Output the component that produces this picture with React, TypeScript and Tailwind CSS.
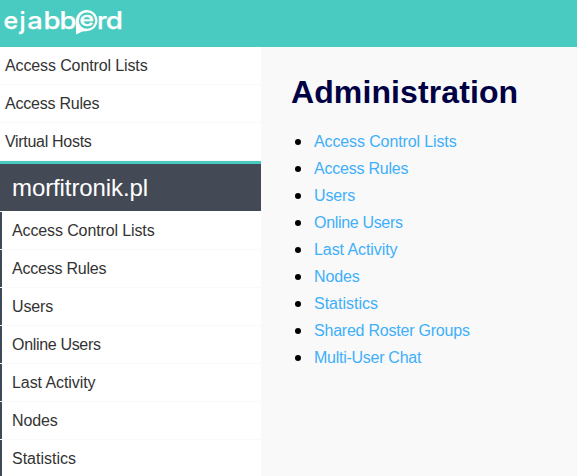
type Item = { label: string; tracking: string };

const acl: Item = { label: "Access Control Lists", tracking: "tracking-[-0.12px]" };
const rules: Item = { label: "Access Rules", tracking: "tracking-[-0.22px]" };
const hosts: Item = { label: "Virtual Hosts", tracking: "tracking-[-0.3px]" };
const users: Item = { label: "Users", tracking: "tracking-[-0.15px]" };
const online: Item = { label: "Online Users", tracking: "tracking-[-0.32px]" };
const activity: Item = { label: "Last Activity", tracking: "tracking-[-0.08px]" };
const nodes: Item = { label: "Nodes", tracking: "tracking-[-0.1px]" };
const statistics: Item = { label: "Statistics", tracking: "tracking-normal" };
const roster: Item = { label: "Shared Roster Groups", tracking: "tracking-[-0.22px]" };
const chat: Item = { label: "Multi-User Chat", tracking: "tracking-[-0.27px]" };

const globalItems = [acl, rules, hosts];
const hostItems = [acl, rules, users, online, activity, nodes, statistics];
const links = [...hostItems, roster, chat];

const letters = [
  { char: "e", x: 3.4, width: 14.6 },
  { char: "a", x: 27.2, width: 15.5 },
  { char: "b", x: 43.4, width: 17 },
  { char: "b", x: 59.6, width: 17 },
  { char: "r", x: 97, width: 10 },
  { char: "d", x: 105.8, width: 17.2 },
];

function Logo() {
  return (
    <svg width="130" height="47" viewBox="0 0 130 47" role="img" aria-label="ejabberd">
      <g
        fill="#fff"
        stroke="#fff"
        strokeWidth="0.25"
        fontFamily="Inter, sans-serif"
        fontSize="24"
        fontWeight="500"
      >
        {letters.map((l) => (
          <text key={l.x} x={l.x} y="28.8" textLength={l.width} lengthAdjust="spacingAndGlyphs">
            {l.char}
          </text>
        ))}
        <text x="19.5" y="28.8">j</text>
      </g>
      <path d="M76 20.600a10.700 10.600 0 1 1 10.700 10.600c-3 0-5 .2-6.500 1.200L76 34.500z" fill="#fff" />
      <circle cx="87" cy="20.600" r="8.200" fill="#4acbc1" />
      <text
        x="79.600"
        y="26.400"
        fill="#fff"
        stroke="#fff"
        strokeWidth="0.3"
        fontFamily="Inter, sans-serif"
        fontSize="20"
        fontWeight="500"
        textLength="14.400"
        lengthAdjust="spacingAndGlyphs"
      >
        e
      </text>
    </svg>
  );
}

export default function App() {
  return (
    <div className="h-[476px] w-full overflow-hidden bg-[#f9f9f9] font-['Liberation_Sans',Arial,sans-serif] text-base">
      <header className="h-[47px] bg-[#4acbc1]">
        <Logo />
      </header>
      <div className="flex">
        <nav className="w-[261px] shrink-0 bg-white text-[#333]">
          <ul>
            {globalItems.map((item) => (
              <li key={item.label} className="h-[38px] border-b border-[#f9f9f9] pl-[5px] leading-[37px]">
                <span className={item.tracking}>{item.label}</span>
              </li>
            ))}
          </ul>
          <div className="h-[50px] border-t-[3px] border-[#4acbc1] bg-[#444a55] pl-3 text-2xl leading-[47px] tracking-[-0.1px] text-white">
            morfitronik.pl
          </div>
          <ul className="pt-px">
            {hostItems.map((item) => (
              <li key={item.label} className="h-[38px] border-b border-[#f9f9f9]">
                <div className="h-[37px] border-l-2 border-[#3f4a59] pl-2.5 leading-[37px]">
                  <span className={item.tracking}>{item.label}</span>
                </div>
              </li>
            ))}
          </ul>
        </nav>
        <main className="pl-[30px] pt-[27px]">
          <h1 className="text-[32px] font-bold leading-[37px] tracking-[0.1px] text-[#000044]">Administration</h1>
          <ul className="pt-[17px]">
            {links.map((item) => (
              <li key={item.label} className="flex h-[27px] items-center pl-1 leading-[27px]">
                <span className="mr-[13px] mt-px size-1.5 rounded-full bg-black" />
                <a className={`text-[#3eaffa] ${item.tracking}`}>{item.label}</a>
              </li>
            ))}
          </ul>
        </main>
      </div>
    </div>
  );
}
